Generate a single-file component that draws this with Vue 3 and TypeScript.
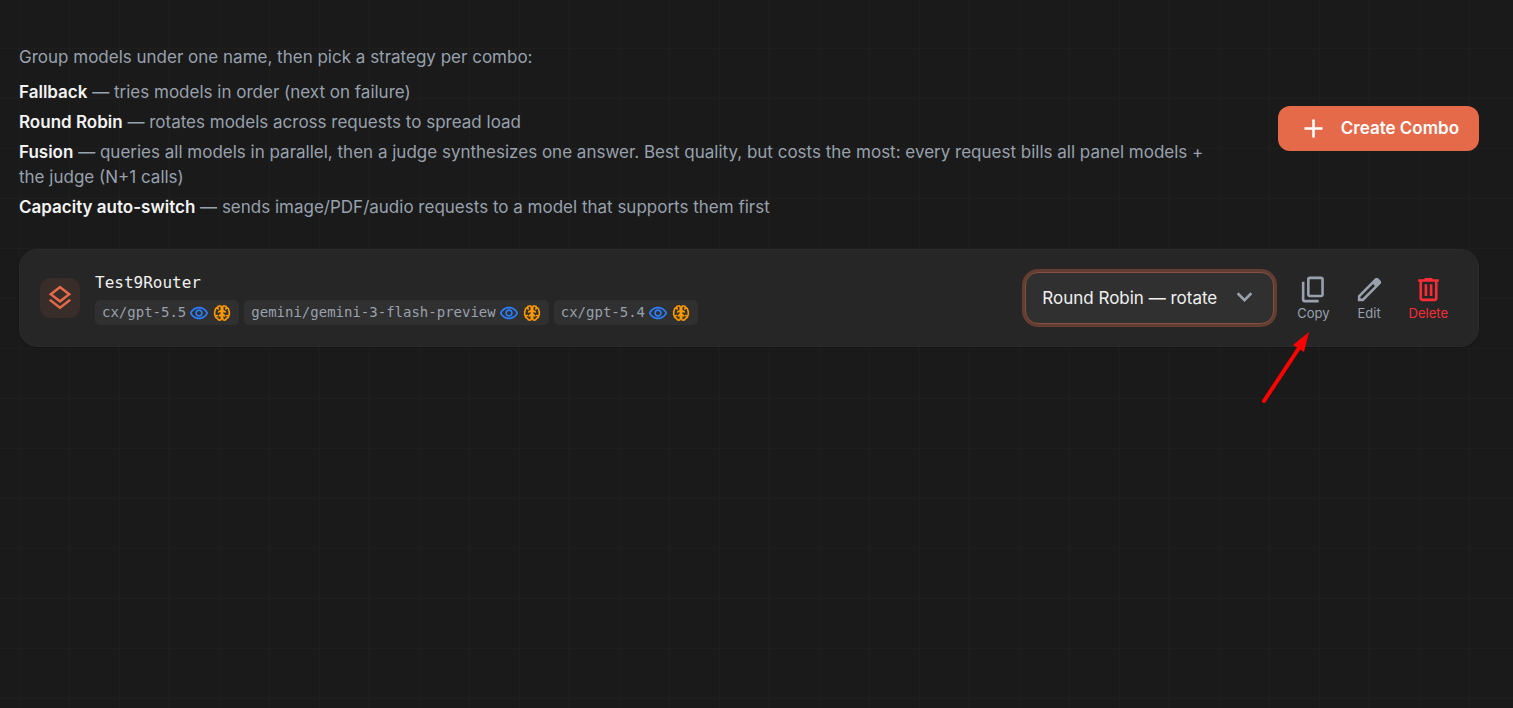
<script setup lang="ts">
import { ref } from 'vue'

interface Strategy {
  name: string
  text: string
}

interface Action {
  id: string
  label: string
  path: string
}

const strategies: Strategy[] = [
  { name: 'Fallback', text: 'tries models in order (next on failure)' },
  { name: 'Round Robin', text: 'rotates models across requests to spread load' },
  {
    name: 'Fusion',
    text: 'queries all models in parallel, then a judge synthesizes one answer. Best quality, but costs the most: every request bills all panel models + the judge (N+1 calls)',
  },
  { name: 'Capacity auto-switch', text: 'sends image/PDF/audio requests to a model that supports them first' },
]

const models: string[] = ['cx/gpt-5.5', 'gemini/gemini-3-flash-preview', 'cx/gpt-5.4']

const actions: Action[] = [
  {
    id: 'copy',
    label: 'Copy',
    path: 'M360-240q-33 0-56.5-23.5T280-320v-480q0-33 23.5-56.5T360-880h360q33 0 56.5 23.5T800-800v480q0 33-23.5 56.5T720-240H360Zm0-80h360v-480H360v480ZM200-80q-33 0-56.5-23.5T120-160v-560h80v560h440v80H200Z',
  },
  {
    id: 'edit',
    label: 'Edit',
    path: 'M200-200h57l391-391-57-57-391 391v57Zm-80 80v-170l528-527q12-11 26.5-17t30.5-6q16 0 31 6t26 18l55 56q12 11 17.5 26t5.5 30q0 16-5.5 30.5T817-647L290-120H120Zm499-499-28-29 57 57-29-28Z',
  },
  {
    id: 'delete',
    label: 'Delete',
    path: 'M280-120q-33 0-56.5-23.5T200-200v-520h-40v-80h200v-40h240v40h200v80h-40v520q0 33-23.5 56.5T680-120H280Zm400-600H280v520h400v-520ZM360-280h80v-360h-80v360Zm160 0h80v-360h-80v360Z',
  },
]

const strategy = ref<string>('round-robin')
</script>

<template>
  <main class="page">
    <header class="intro">
      <div class="intro-text">
        <p>Group models under one name, then pick a strategy per combo:</p>
        <ul>
          <li v-for="s in strategies" :key="s.name"><strong>{{ s.name }}</strong> — {{ s.text }}</li>
        </ul>
      </div>
      <button type="button" class="create">
        <svg class="icon" viewBox="0 -960 960 960" aria-hidden="true">
          <path d="M440-440H200v-80h240v-240h80v240h240v80H520v240h-80v-240Z" />
        </svg>
        Create Combo
      </button>
    </header>

    <section class="card">
      <div class="badge">
        <svg viewBox="0 0 24 24" aria-hidden="true">
          <path d="M11.99 18.54l-7.37-5.73L3 14.07l9 7 9-7-1.63-1.27zM12 16l7.36-5.73L21 9l-9-7-9 7 1.63 1.27L12 16zm0-11.47L17.74 9 12 13.47 6.26 9 12 4.53z" />
        </svg>
      </div>
      <div class="details">
        <code class="name">Test9Router</code>
        <div class="chips">
          <code v-for="m in models" :key="m" class="chip">
            {{ m }}
            <svg class="eye" viewBox="0 0 24 24" aria-hidden="true">
              <path d="M12 6.5c3.79 0 7.17 2.13 8.82 5.5-1.65 3.37-5.03 5.5-8.82 5.5S4.83 15.37 3.18 12C4.83 8.63 8.21 6.5 12 6.5m0-2C7 4.5 2.73 7.61 1 12c1.73 4.39 6 7.5 11 7.5s9.27-3.11 11-7.5c-1.73-4.39-6-7.5-11-7.5zm0 5c1.38 0 2.5 1.12 2.5 2.5s-1.12 2.5-2.5 2.5-2.5-1.12-2.5-2.5 1.12-2.5 2.5-2.5m0-2c-2.48 0-4.5 2.02-4.5 4.5s2.02 4.5 4.5 4.5 4.5-2.02 4.5-4.5-2.02-4.5-4.5-4.5z" />
            </svg>
            <svg class="brain" viewBox="0 0 24 24" aria-hidden="true">
              <g v-for="side in ['left', 'right']" :key="side" :transform="side === 'right' ? 'matrix(-1 0 0 1 24 0)' : undefined">
                <path d="M11.2 5A2 2 0 0 0 9 3.5A2.4 2.4 0 0 0 6.6 5.6A2.8 2.8 0 0 0 4 8.6A3.6 3.6 0 0 0 3.3 12A3.6 3.6 0 0 0 4 15.4A2.8 2.8 0 0 0 6.6 18.4A2.4 2.4 0 0 0 9 20.5A2 2 0 0 0 11.2 19Z" />
                <path d="M4 15.2C5.5 15.7 6.5 15.2 7 14.5M6.6 5.6C6.7 6.8 7.3 7.3 8.2 7.5M11 9.8H9.8C8.6 9.8 8 10.5 7.6 11.5M11 14.3C9.4 14.3 8.7 15.2 8.6 16.3" />
              </g>
            </svg>
          </code>
        </div>
      </div>

      <div class="controls">
        <div class="picker">
          <select v-model="strategy" aria-label="Strategy">
            <option value="fallback">Fallback</option>
            <option value="round-robin">Round Robin — rotate</option>
            <option value="fusion">Fusion</option>
          </select>
          <svg class="icon chevron" viewBox="0 -960 960 960" aria-hidden="true">
            <path d="M480-344 240-584l56-56 184 184 184-184 56 56-240 240Z" />
          </svg>
        </div>
        <div class="actions">
          <button v-for="a in actions" :key="a.id" type="button" :class="['action', a.id]">
            <svg class="icon" viewBox="0 -960 960 960" aria-hidden="true"><path :d="a.path" /></svg>
            <span>{{ a.label }}</span>
          </button>
          <svg class="pointer" viewBox="0 0 50 74" aria-hidden="true">
            <path d="M4 70 39 17" />
            <polygon points="49,1 33,14 44,21" />
          </svg>
        </div>
      </div>
    </section>
  </main>
</template>

<style>
html,
body {
  background: #1a1a1a;
}
</style>

<style scoped>
.page {
  box-sizing: border-box;
  min-height: 100vh;
  padding: 37px 34px 37px 19px;
  background-color: #1a1a1a;
  background-image:
    linear-gradient(to right, #201d1d 1px, transparent 1px),
    linear-gradient(to bottom, #201d1d 1px, transparent 1px);
  background-size: 50px 50px;
  background-position: 19px 48px;
  color: #f0f0f0;
  font-family: Inter, "Liberation Sans", sans-serif;
  font-size: 17px;
  line-height: 25px;
}

button,
select {
  margin: 0;
  font: inherit;
  cursor: pointer;
}

.icon {
  display: block;
  flex: none;
  width: 31px;
  height: 31px;
  fill: currentColor;
}

.intro {
  display: flex;
  align-items: center;
  justify-content: space-between;
  gap: 50px;
  margin-bottom: 29px;
}

.intro-text {
  padding-top: 8px;
  color: #98a1ad;
}

.intro-text p {
  margin: 0 0 10px;
}

.intro-text ul {
  display: grid;
  gap: 5px;
  margin: 0;
  padding: 0;
  list-style: none;
}

.intro-text strong {
  color: #f4f4f4;
  font-weight: 600;
}

.create {
  display: flex;
  flex: none;
  align-items: center;
  gap: 12px;
  height: 45px;
  padding: 0 20px;
  border: 0;
  border-radius: 12px;
  background: #e56a4a;
  color: #fff;
  font-weight: 600;
}

.card {
  display: flex;
  align-items: center;
  gap: 15px;
  padding: 20px;
  border: 1px solid #2b2b2b;
  border-radius: 18px;
  background: #262626;
  box-shadow: 0 1px 2px rgba(0, 0, 0, 0.3);
}

.badge {
  display: grid;
  flex: none;
  place-items: center;
  width: 40px;
  height: 40px;
  border-radius: 10px;
  background: #392d2a;
}

.badge svg {
  width: 30px;
  height: 30px;
  fill: #e56a4a;
}

.details {
  display: grid;
  flex: 1;
  align-self: flex-start;
  gap: 5px;
}

.name,
.chip {
  font-family: "DejaVu Sans Mono", "Liberation Mono", monospace;
}

.name {
  font-size: 16px;
}

.chips {
  display: flex;
  flex-wrap: wrap;
  gap: 5px;
}

.chip {
  display: flex;
  align-items: center;
  gap: 3px;
  padding: 0 7px;
  border-radius: 5px;
  background: #303030;
  color: #98a1ad;
  font-size: 14px;
}

.chip svg {
  width: 20px;
  height: 20px;
}

.eye {
  fill: #2b7fff;
}

.brain {
  fill: none;
  stroke: #fe9a00;
  stroke-width: 2;
}

.controls {
  display: flex;
  align-items: center;
  gap: 13px;
}

.picker {
  position: relative;
}

.picker select {
  display: block;
  height: 52px;
  padding: 0 56px 0 16px;
  border: 1px solid #84503f;
  border-radius: 13px;
  outline: 0;
  background: #303030;
  box-shadow: 0 0 0 3px #633c32;
  color: #f0f0f0;
  appearance: none;
}

.chevron {
  position: absolute;
  top: 10px;
  right: 14px;
  color: #98a1ad;
  pointer-events: none;
}

.actions {
  position: relative;
  display: flex;
  gap: 4px;
}

.action {
  display: flex;
  flex-direction: column;
  align-items: center;
  padding: 4px 10px;
  border: 0;
  border-radius: 10px;
  background: transparent;
  color: #98a1ad;
  font-size: 13px;
  line-height: 17px;
}

.delete {
  color: #fb2c36;
}

.pointer {
  position: absolute;
  top: 61px;
  left: -27px;
  width: 50px;
  height: 74px;
  pointer-events: none;
}

.pointer path {
  stroke: #f00;
  stroke-width: 4;
  stroke-linecap: round;
}

.pointer polygon {
  fill: #f00;
}
</style>
